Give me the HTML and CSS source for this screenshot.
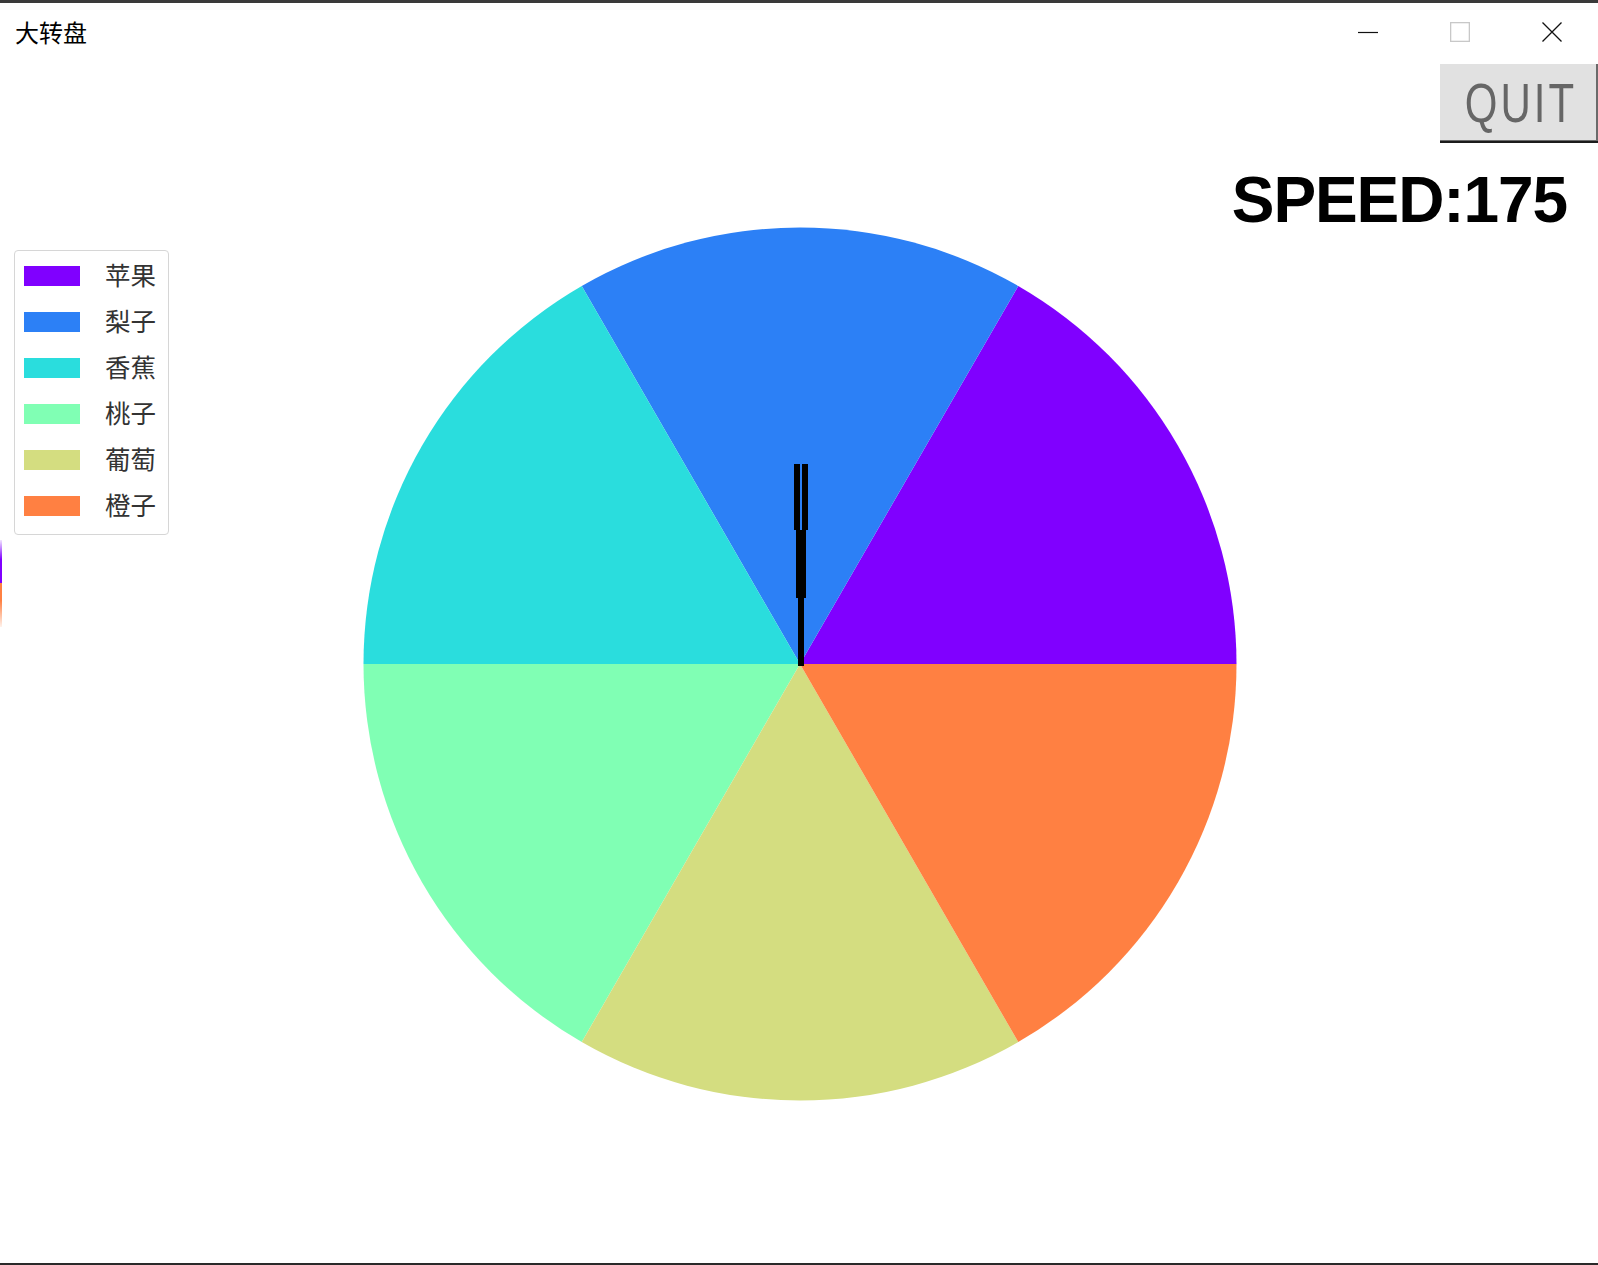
FILE: index.html
```html
<!DOCTYPE html>
<html lang="zh">
<head>
<meta charset="utf-8">
<title>大转盘</title>
<link rel="stylesheet" href="styles.css">
</head>
<body>
<div class="window">
  <div class="titlebar">
    <div class="title">大转盘</div>
    <div class="controls">
      <div class="ctl"><svg width="20" height="20" viewBox="0 0 20 20"><line x1="0" y1="10.5" x2="20" y2="10.5" stroke="#111" stroke-width="1.2"/></svg></div>
      <div class="ctl"><svg width="20" height="20" viewBox="0 0 20 20"><rect x="0.65" y="0.65" width="18.7" height="18.7" fill="none" stroke="#c8c8c8" stroke-width="1.3"/></svg></div>
      <div class="ctl"><svg width="20" height="20" viewBox="0 0 20 20"><path d="M0.5 0.5 L19.5 19.5 M19.5 0.5 L0.5 19.5" stroke="#111" stroke-width="1.3" fill="none"/></svg></div>
    </div>
  </div>
  <div class="figure">
    <svg class="canvas" width="1598" height="1199" viewBox="0 0 1598 1199">
      <defs>
        <linearGradient id="fadeTop" x1="0" y1="0" x2="0" y2="1">
          <stop offset="0" stop-color="#8000ff" stop-opacity="0.1"/>
          <stop offset="0.45" stop-color="#8000ff" stop-opacity="1"/>
          <stop offset="1" stop-color="#8000ff" stop-opacity="1"/>
        </linearGradient>
        <linearGradient id="fadeBot" x1="0" y1="0" x2="0" y2="1">
          <stop offset="0" stop-color="#ff8042" stop-opacity="1"/>
          <stop offset="0.4" stop-color="#ff8042" stop-opacity="1"/>
          <stop offset="1" stop-color="#ff8042" stop-opacity="0.1"/>
        </linearGradient>
      </defs>
      <rect x="0" y="476" width="2" height="43" fill="url(#fadeTop)"/>
      <rect x="0" y="519" width="2" height="44" fill="url(#fadeBot)"/>
      <path d="M800 600 L1236.5 600 A436.5 436.5 0 0 0 1018.25 221.98 Z" fill="#8000ff"/>
      <path d="M800 600 L1018.25 221.98 A436.5 436.5 0 0 0 581.75 221.98 Z" fill="#2c80f6"/>
      <path d="M800 600 L581.75 221.98 A436.5 436.5 0 0 0 363.5 600 Z" fill="#2adddd"/>
      <path d="M800 600 L363.5 600 A436.5 436.5 0 0 0 581.75 978.02 Z" fill="#80ffb4"/>
      <path d="M800 600 L581.75 978.02 A436.5 436.5 0 0 0 1018.25 978.02 Z" fill="#d4dd80"/>
      <path d="M800 600 L1018.25 978.02 A436.5 436.5 0 0 0 1236.5 600 Z" fill="#ff8042"/>
      <rect x="794" y="400" width="6" height="66" fill="#000"/>
      <rect x="802" y="400" width="6" height="66" fill="#000"/>
      <rect x="796" y="466" width="10" height="68" fill="#000"/>
      <rect x="798" y="534" width="6" height="68" fill="#000"/>
    </svg>
    <div class="side">
      <div class="quit"><span>QUIT</span></div>
      <div class="speed">SPEED:175</div>
    </div>
    <div class="legend">
      <div class="item"><span class="sw c1"></span><span class="lbl">苹果</span></div>
      <div class="item"><span class="sw c2"></span><span class="lbl">梨子</span></div>
      <div class="item"><span class="sw c3"></span><span class="lbl">香蕉</span></div>
      <div class="item"><span class="sw c4"></span><span class="lbl">桃子</span></div>
      <div class="item"><span class="sw c5"></span><span class="lbl">葡萄</span></div>
      <div class="item"><span class="sw c6"></span><span class="lbl">橙子</span></div>
    </div>
  </div>
</div>
</body>
</html>
```
FILE: styles.css
```css
html, body {
  margin: 0;
  padding: 0;
  background: #ffffff;
}
body {
  width: 1598px;
  height: 1265px;
  overflow: hidden;
  font-family: "Liberation Sans", "Noto Sans CJK SC", sans-serif;
}
.window {
  width: 1598px;
  height: 1265px;
  box-sizing: border-box;
  border-top: 3px solid #3a3a3a;
  border-bottom: 2px solid #2a2a2a;
  display: flex;
  flex-direction: column;
  background: #fff;
}
.titlebar {
  height: 61px;
  display: flex;
  justify-content: space-between;
  align-items: flex-start;
  flex: none;
}
.title {
  font-family: "Noto Sans CJK SC", sans-serif;
  font-size: 24px;
  line-height: 30px;
  color: #000;
  padding-left: 15px;
  padding-top: 14px;
}
.controls {
  display: flex;
  padding-top: 19px;
}
.ctl {
  width: 92px;
  height: 20px;
  display: flex;
  justify-content: center;
}
.ctl svg {
  display: block;
}
.figure {
  position: relative;
  flex: 1;
  overflow: hidden;
}
.canvas {
  position: absolute;
  left: 0;
  top: 0;
}
.side {
  position: relative;
  display: flex;
  flex-direction: column;
  align-items: flex-end;
}
.quit {
  width: 158px;
  height: 79px;
  box-sizing: border-box;
  background: #e1e1e1;
  border-bottom: 2px solid #1c1c1c;
  box-shadow: inset 0 -1px 0 #6a6a6a, inset -2px 0 0 #6a6a6a;
  display: flex;
  align-items: center;
  justify-content: center;
}
.quit span {
  font-family: "Liberation Sans", sans-serif;
  font-size: 56px;
  line-height: 1;
  color: #666;
  letter-spacing: 4px;
  transform: scaleX(0.75);
  margin-right: -3px;
  margin-top: 1px;
}
.speed {
  font-family: "Liberation Sans", sans-serif;
  font-weight: bold;
  font-size: 64px;
  line-height: 1;
  letter-spacing: -1.1px;
  color: #000;
  margin-top: 25px;
  margin-right: 31px;
}
.legend {
  position: absolute;
  left: 14px;
  top: 186px;
  width: 155px;
  box-sizing: border-box;
  border: 1px solid #d6d6d6;
  border-radius: 4px;
  background: #fff;
  padding: 2px 10px 5px 9px;
}
.item {
  height: 46px;
  display: flex;
  align-items: center;
}
.sw {
  width: 56px;
  height: 20px;
  flex: none;
}
.lbl {
  margin-left: 25px;
  margin-bottom: 4px;
  font-family: "Noto Sans CJK SC", sans-serif;
  font-size: 25.5px;
  line-height: 1;
  color: #333;
}
.c1 { background: #8000ff; }
.c2 { background: #2c80f6; }
.c3 { background: #2adddd; }
.c4 { background: #80ffb4; }
.c5 { background: #d4dd80; }
.c6 { background: #ff8042; }
```
